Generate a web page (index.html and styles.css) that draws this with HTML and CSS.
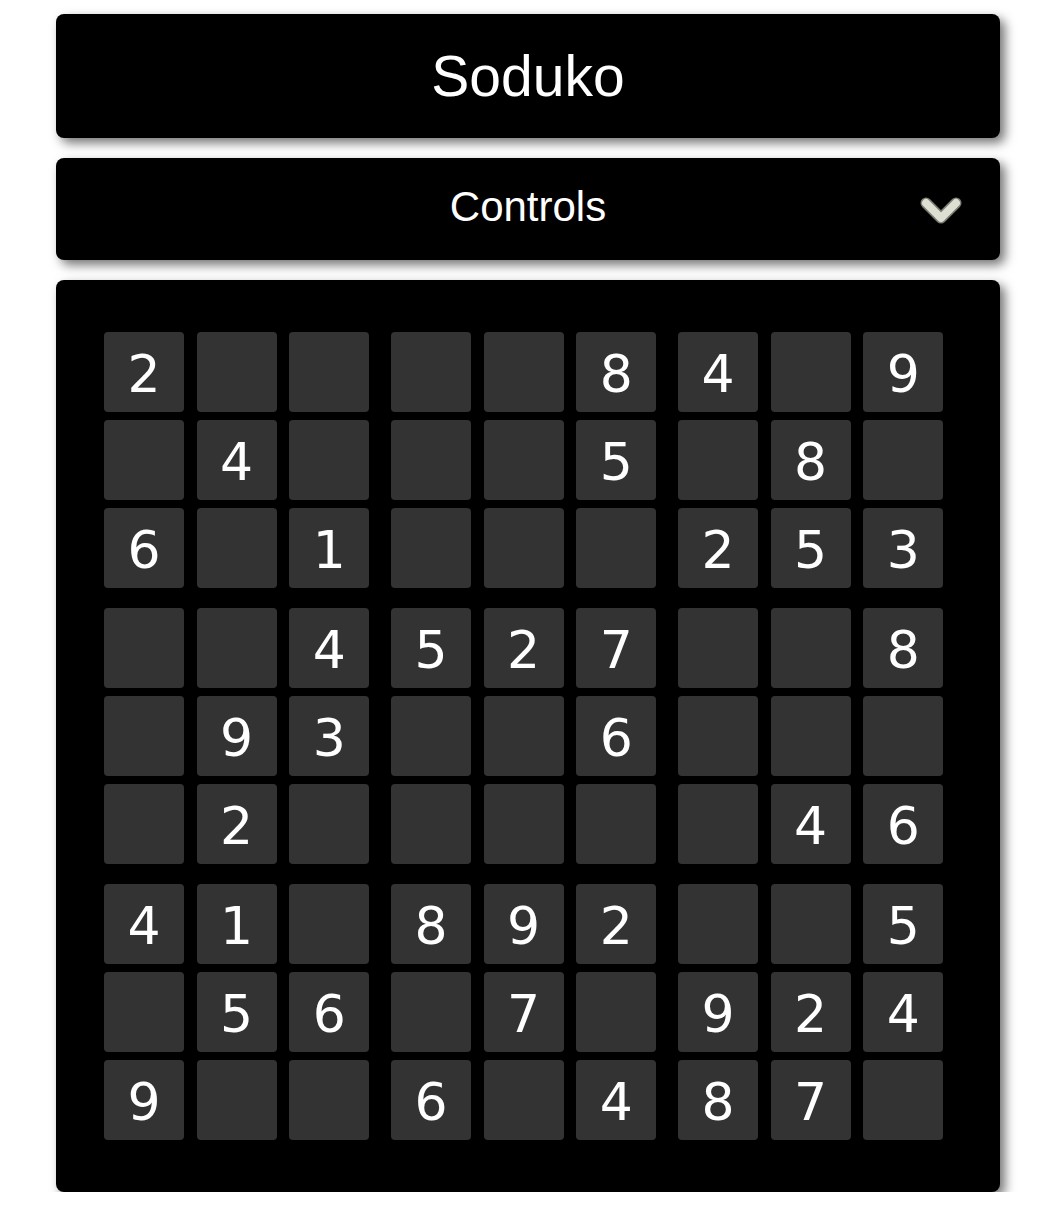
FILE: index.html
```html
<!DOCTYPE html>
<html>
<head>
<meta charset="utf-8">
<link rel="stylesheet" href="styles.css">
</head>
<body>
<div class="app">
  <header class="panel title-bar"><h1 class="title">Soduko</h1></header>
  <div class="panel controls-bar">
    <span></span>
    <span class="controls-label">Controls</span>
    <svg class="chevron" viewBox="0 0 44 34" width="44" height="34">
      <polyline points="8,10 23,25 38,10" fill="none" stroke="#7c7c72" stroke-width="11" stroke-linecap="round" stroke-linejoin="round"/>
      <polyline points="8,10 23,25 38,10" fill="none" stroke="#dedfd3" stroke-width="8" stroke-linecap="round" stroke-linejoin="round"/>
    </svg>
  </div>
  <div class="panel board">
    <div class="grid">
      <div class="box"><div class="cell">2</div><div class="cell"></div><div class="cell"></div><div class="cell"></div><div class="cell">4</div><div class="cell"></div><div class="cell">6</div><div class="cell"></div><div class="cell">1</div></div>
      <div class="box"><div class="cell"></div><div class="cell"></div><div class="cell">8</div><div class="cell"></div><div class="cell"></div><div class="cell">5</div><div class="cell"></div><div class="cell"></div><div class="cell"></div></div>
      <div class="box"><div class="cell">4</div><div class="cell"></div><div class="cell">9</div><div class="cell"></div><div class="cell">8</div><div class="cell"></div><div class="cell">2</div><div class="cell">5</div><div class="cell">3</div></div>
      <div class="box"><div class="cell"></div><div class="cell"></div><div class="cell">4</div><div class="cell"></div><div class="cell">9</div><div class="cell">3</div><div class="cell"></div><div class="cell">2</div><div class="cell"></div></div>
      <div class="box"><div class="cell">5</div><div class="cell">2</div><div class="cell">7</div><div class="cell"></div><div class="cell"></div><div class="cell">6</div><div class="cell"></div><div class="cell"></div><div class="cell"></div></div>
      <div class="box"><div class="cell"></div><div class="cell"></div><div class="cell">8</div><div class="cell"></div><div class="cell"></div><div class="cell"></div><div class="cell"></div><div class="cell">4</div><div class="cell">6</div></div>
      <div class="box"><div class="cell">4</div><div class="cell">1</div><div class="cell"></div><div class="cell"></div><div class="cell">5</div><div class="cell">6</div><div class="cell">9</div><div class="cell"></div><div class="cell"></div></div>
      <div class="box"><div class="cell">8</div><div class="cell">9</div><div class="cell">2</div><div class="cell"></div><div class="cell">7</div><div class="cell"></div><div class="cell">6</div><div class="cell"></div><div class="cell">4</div></div>
      <div class="box"><div class="cell"></div><div class="cell"></div><div class="cell">5</div><div class="cell">9</div><div class="cell">2</div><div class="cell">4</div><div class="cell">8</div><div class="cell">7</div><div class="cell"></div></div>
    </div>
  </div>
</div>
</body>
</html>
```

FILE: styles.css
```css
html, body {
  margin: 0;
  padding: 0;
  background: #ffffff;
}

.app {
  width: 944px;
  margin: 14px 0 0 56px;
  display: flex;
  flex-direction: column;
  gap: 20px;
  font-family: "Liberation Sans", Arial, sans-serif;
  color: #ffffff;
}

.panel {
  background: #000000;
  border-radius: 8px;
  box-shadow: 5px 5px 11px rgba(0, 0, 0, 0.55);
}

.title-bar {
  height: 124px;
  display: flex;
  align-items: center;
  justify-content: center;
}

.title {
  margin: 0;
  font-size: 57px;
  font-weight: normal;
  line-height: 1;
}

.controls-bar {
  height: 102px;
  display: grid;
  grid-template-columns: 1fr auto 1fr;
  align-items: center;
}

.controls-label {
  font-size: 42px;
  line-height: 1;
  padding-bottom: 4px;
}

.chevron {
  justify-self: end;
  margin-right: 38px;
  margin-top: 2px;
  display: block;
}

.board {
  height: 912px;
  box-sizing: border-box;
  padding: 52px 56px 52px 48px;
}

.grid {
  display: grid;
  grid-template-columns: repeat(3, 265.33px);
  column-gap: 21.67px;
  row-gap: 20px;
}

.box {
  display: grid;
  grid-template-columns: repeat(3, 80px);
  grid-auto-rows: 80px;
  column-gap: 12.67px;
  row-gap: 8px;
}

.cell {
  background: #333333;
  border-radius: 4px;
  font-family: "DejaVu Sans", Verdana, sans-serif;
  font-size: 52px;
  line-height: 84px;
  height: 80px;
  overflow: hidden;
  text-align: center;
  color: #ffffff;
}
```
